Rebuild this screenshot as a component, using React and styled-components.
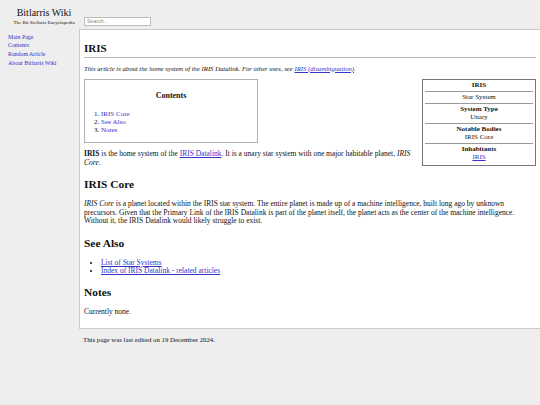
import React from 'react';
import styled, { createGlobalStyle } from 'styled-components';

const GlobalStyle = createGlobalStyle`
  html, body {
    margin: 0;
    padding: 0;
    background: #eeeeee;
    overflow: hidden;
  }

  body {
    font-family: "Liberation Serif", "Times New Roman", serif;
    font-size: 7px;
    color: #111;
  }

  a {
    color: #3434c8;
  }
`;

const sidebarLinks = ['Main Page', 'Contents', 'Random Article', 'About Bitlarris Wiki'];

const infobox = [
  { label: 'IRIS' },
  { value: 'Star System' },
  { label: 'System Type', value: 'Unary' },
  { label: 'Notable Bodies', value: 'IRIS Core' },
  { label: 'Inhabitants', value: 'IRIS', link: true },
];

const App = () => {
  return (
    <>
      <GlobalStyle />
      <Page>
        <Header>
          <Brand>
            <SiteName>Bitlarris Wiki</SiteName>
            <Tagline>The Bit Stellaris Encyclopedia</Tagline>
          </Brand>
          <SearchInput placeholder="Search..." />
        </Header>

        <Body>
          <Sidebar>
            {sidebarLinks.map((label) => (
              <SideLink key={label} href="#">
                {label}
              </SideLink>
            ))}
          </Sidebar>

          <Main>
            <Panel>
              <Title>IRIS</Title>
              <Hatnote>
                This article is about the home system of the IRIS Datalink. For other uses, see{' '}
                <a href="#">IRIS (disambiguation)</a>.
              </Hatnote>

              <Infobox>
                {infobox.map((row, i) => (
                  <InfoRow key={i} $last={i === infobox.length - 1}>
                    {row.label && <InfoLabel>{row.label}</InfoLabel>}
                    {row.value && (
                      <div>{row.link ? <a href="#">{row.value}</a> : row.value}</div>
                    )}
                  </InfoRow>
                ))}
              </Infobox>

              <Toc>
                <TocTitle>Contents</TocTitle>
                <TocList>
                  <li><a href="#">IRIS Core</a></li>
                  <li><a href="#">See Also</a></li>
                  <li><a href="#">Notes</a></li>
                </TocList>
              </Toc>

              <Paragraph>
                <b>IRIS</b> is the home system of the <a href="#">IRIS Datalink</a>. It is a unary
                star system with one major habitable planet, <i>IRIS Core</i>.
              </Paragraph>

              <Section>IRIS Core</Section>
              <Paragraph>
                <i>IRIS Core</i> is a planet located within the IRIS star system. The entire planet is
                made up of a machine intelligence, built long ago by unknown precursors. Given that the
                Primary Link of the IRIS Datalink is part of the planet itself, the planet acts as the
                center of the machine intelligence. Without it, the IRIS Datalink would likely struggle
                to exist.
              </Paragraph>

              <Section>See Also</Section>
              <BulletList>
                <li><a href="#">List of Star Systems</a></li>
                <li><a href="#">Index of IRIS Datalink - related articles</a></li>
              </BulletList>

              <Section>Notes</Section>
              <Paragraph>Currently none.</Paragraph>
            </Panel>

            <Footer>This page was last edited on 19 December 2024.</Footer>
          </Main>
        </Body>
      </Page>
    </>
  );
};

export default App;

// 전체
const Page = styled.div`
  width: 540px;
  min-height: 405px;
`;

// 상단 로고 + 검색
const Header = styled.header`
  display: flex;
  align-items: flex-start;
  height: 29px;
`;

const Brand = styled.div`
  width: 84px;
  box-sizing: border-box;
  padding: 6.5px 0 0 4px;
  display: flex;
  flex-direction: column;
  align-items: center;
`;

const SiteName = styled.div`
  font-size: 10px;
  line-height: 11px;
`;

const Tagline = styled.div`
  font-size: 5px;
  line-height: 6px;
  margin-top: 2.5px;
`;

const SearchInput = styled.input`
  box-sizing: border-box;
  width: 67px;
  height: 9px;
  margin: 16.5px 0 0;
  padding: 0 2px;
  border: 1px solid #bdbdbd;
  background: #fff;
  font-family: "Liberation Sans", Arial, sans-serif;
  font-size: 5.3px;
  outline: none;

  &::placeholder {
    color: #8a8a8a;
  }
`;

const Body = styled.div`
  display: flex;
  align-items: flex-start;
`;

// 왼쪽 메뉴
const Sidebar = styled.nav`
  width: 79px;
  flex-shrink: 0;
  display: flex;
  flex-direction: column;
  padding: 3.6px 0 0 8px;
  box-sizing: border-box;
`;

const SideLink = styled.a`
  font-size: 5.9px;
  line-height: 8.7px;
  text-decoration: none;
  color: #3434c8;
`;

const Main = styled.main`
  flex: 1;
  min-width: 0;
`;

// 본문 상자
const Panel = styled.article`
  background: #fff;
  border: 1.5px solid #cbcbcb;
  border-right: none;
  padding: 12px 4px 6px 4px;

  &::after {
    content: '';
    display: block;
    clear: both;
  }
`;

const Title = styled.h1`
  font-size: 11px;
  line-height: 13px;
  margin: 0;
  padding-bottom: 1.5px;
  border-bottom: 1px solid #bcbcbc;
`;

const Hatnote = styled.p`
  font-style: italic;
  font-size: 6.7px;
  line-height: 9px;
  margin: 6px 0 6px;
`;

const Toc = styled.div`
  width: 174px;
  box-sizing: border-box;
  border: 1px solid #b0b0b0;
  padding: 11.5px 8px 8px;
  margin-bottom: 7.5px;
`;

const TocTitle = styled.div`
  text-align: center;
  font-weight: bold;
  font-size: 8px;
  line-height: 9px;
  margin-bottom: 9.5px;
`;

const TocList = styled.ol`
  margin: 0;
  padding-left: 8px;
  line-height: 8px;

  a {
    text-decoration: none;
  }
`;

const Infobox = styled.aside`
  float: right;
  width: 114px;
  box-sizing: border-box;
  border: 1px solid #777;
  padding: 0 2px 2.5px;
  margin: 0 0 6px 4px;
  text-align: center;
  line-height: 8px;
`;

const InfoRow = styled.div`
  padding: 1.5px 0;
  border-bottom: ${(p) => (p.$last ? 'none' : '1px solid #999')};
`;

const InfoLabel = styled.div`
  font-weight: bold;
`;

const Paragraph = styled.p`
  font-size: 7.5px;
  line-height: 8.7px;
  margin: 0 0 5px;
`;

const Section = styled.h2`
  font-size: 11.4px;
  line-height: 12px;
  margin: 10.5px 0 10px;
`;

const BulletList = styled.ul`
  font-size: 7.5px;
  line-height: 8.7px;
  margin: 0 0 5px;
  padding-left: 17px;
`;

// 하단 정보
const Footer = styled.footer`
  padding: 6px 4px;
  font-size: 6.8px;
  line-height: 9px;
`;
